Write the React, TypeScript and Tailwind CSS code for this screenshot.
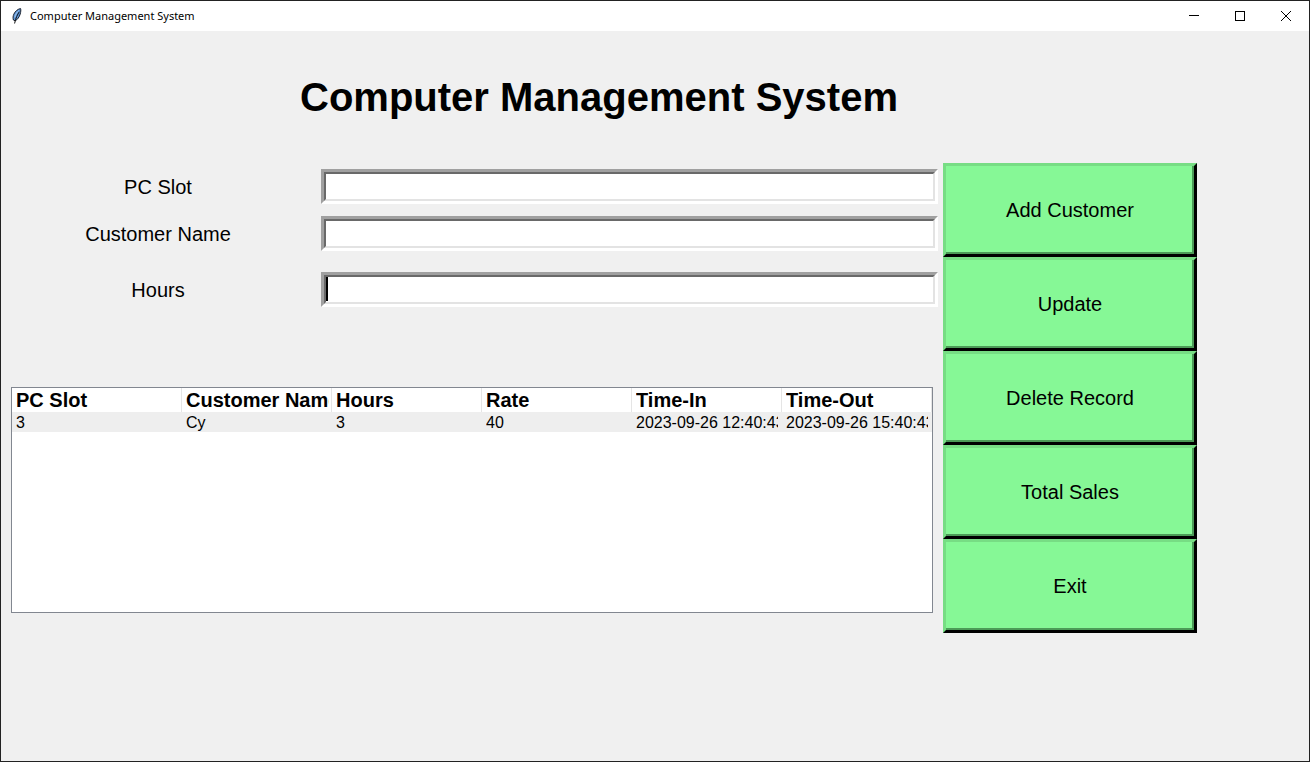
import React from "react";

const fields = [
  { id: "pc-slot", label: "PC Slot", gap: "mt-1.5" },
  { id: "customer-name", label: "Customer Name", gap: "mt-3" },
  { id: "hours", label: "Hours", gap: "mt-[21px]", caret: true },
];

const columns = ["PC Slot", "Customer Name", "Hours", "Rate", "Time-In", "Time-Out"];

const rows = [["3", "Cy", "3", "40", "2023-09-26 12:40:43", "2023-09-26 15:40:43"]];

const actions = ["Add Customer", "Update", "Delete Record", "Total Sales", "Exit"];

function FeatherIcon() {
  return (
    <svg width="12" height="16" viewBox="0 0 12 16" aria-hidden="true">
      <path d="M9.600.6C7 .9 4.200 3.200 2.800 6.200 2 8 1.800 10 2.400 12L4.200 12.800C6.600 11.600 8.300 9 9.200 6 9.800 4 10 2 9.600.6Z" fill="#5b93d6" stroke="#1a1f2b" strokeWidth="1" />
      <path d="M7.800 2.500C5.900 4 4.500 6.500 3.800 9.500" fill="none" stroke="#a5cbf2" strokeWidth="1" />
      <path d="M8.300 3.800C6.500 6.500 4.600 10 3.600 15.500" fill="none" stroke="#111111" strokeWidth="1" />
    </svg>
  );
}

function TitleBar() {
  const control = "flex h-full w-[46px] items-center justify-center";
  return (
    <header className="flex h-[30px] items-center justify-between bg-white">
      <div className="flex items-center gap-[7px] pl-2.5">
        <FeatherIcon />
        <span className="font-['Noto_Sans','Open_Sans',sans-serif] text-[11px] leading-4">Computer Management System</span>
      </div>
      <div className="flex h-full">
        <button type="button" aria-label="Minimize" className={control}>
          <svg width="10" height="10" viewBox="0 0 10 10" shapeRendering="crispEdges"><path d="M0 4.500H10" stroke="#000" /></svg>
        </button>
        <button type="button" aria-label="Maximize" className={control}>
          <svg width="10" height="10" viewBox="0 0 10 10" shapeRendering="crispEdges"><path d="M.5.5H9.500V9.500H.5Z" fill="none" stroke="#000" /></svg>
        </button>
        <button type="button" aria-label="Close" className={control}>
          <svg width="10" height="10" viewBox="0 0 10 10"><path d="M0 0L10 10M10 0L0 10" stroke="#000" /></svg>
        </button>
      </div>
    </header>
  );
}

export default function App() {
  return (
    <div className="flex min-h-screen flex-col border border-[#222222] bg-[#f0f0f0] font-['Liberation_Sans',Arial,sans-serif] text-black">
      <TitleBar />
      <main className="pr-28">
        <h1 className="pt-10 pb-10 text-center text-[40px] leading-[52px] font-bold">Computer Management System</h1>
        <div className="flex items-start gap-[5px] pl-2.5">
          <div className="min-w-0 flex-1">
            <form>
              {fields.map((field) => (
                <div key={field.id} className={`flex items-center gap-4 ${field.gap}`}>
                  <label htmlFor={field.id} className="w-[294px] shrink-0 text-center text-[20px] leading-6">
                    {field.label}
                  </label>
                  <div className="relative min-w-0 flex-1 border-[3px] border-t-[#a0a0a0] border-r-white border-b-white border-l-[#a0a0a0]">
                    <input
                      id={field.id}
                      type="text"
                      className="block h-[29px] w-full border-2 border-t-[#696969] border-r-[#e3e3e3] border-b-[#e3e3e3] border-l-[#696969] bg-white px-0.5 text-[20px] outline-none"
                    />
                    {field.caret && <span className="absolute top-0.5 left-0.5 h-6 w-0.5 bg-black" />}
                  </div>
                </div>
              ))}
            </form>
            <div className="mt-20 mr-[5px] h-[226px] border border-[#828790] bg-white">
              <table className="w-full table-fixed border-collapse text-left">
                <colgroup>
                  <col className="w-[170px]" />
                  <col span={5} />
                </colgroup>
                <thead>
                  <tr>
                    {columns.map((name) => (
                      <th key={name} className="h-6 p-0 text-[20px] leading-6 font-bold shadow-[inset_-1px_0_0_#e5e5e5]">
                        <div className="mr-[3px] ml-1 overflow-hidden whitespace-nowrap">{name}</div>
                      </th>
                    ))}
                  </tr>
                </thead>
                <tbody>
                  {rows.map((row) => (
                    <tr key={row[0]} className="bg-[#eeeeee]">
                      {row.map((cell, i) => (
                        <td key={columns[i]} className="h-5 p-0 pt-0.5 text-[16px] leading-[18px]">
                          <div className="mr-1 ml-1 overflow-hidden whitespace-nowrap">{cell}</div>
                        </td>
                      ))}
                    </tr>
                  ))}
                </tbody>
              </table>
            </div>
          </div>
          <div className="flex w-[254px] shrink-0 flex-col">
            {actions.map((action) => (
              <button
                key={action}
                type="button"
                className="flex h-[94px] border-[3px] border-t-[#77dd84] border-r-black border-b-black border-l-[#77dd84] bg-[#86f896] text-[20px] leading-6"
              >
                <span className="flex h-full w-full items-center justify-center border-r-2 border-b-2 border-[#4c9b57] pt-0.5 pl-0.5">{action}</span>
              </button>
            ))}
          </div>
        </div>
      </main>
    </div>
  );
}
